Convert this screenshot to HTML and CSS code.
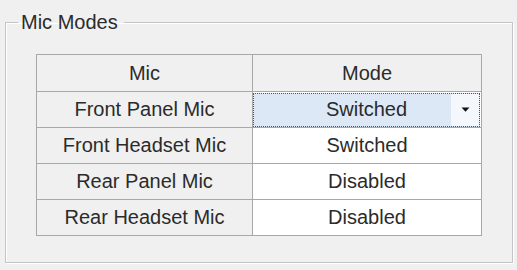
FILE: index.html
```html
<html lang="en"><head>
    <meta charset="UTF-8">
    <meta name="viewport" content="width=device-width, initial-scale=1.0">
    <title>Mic Modes</title>
    <link rel="stylesheet" href="styles.css">
</head>
<body>
    <fieldset class="group-box">
        <legend>Mic Modes</legend>
        <table class="mic-grid">
            <tr>
                <th class="col-mic">Mic</th>
                <th class="col-mode">Mode</th>
            </tr>
            <tr>
                <td class="row-head">Front Panel Mic</td>
                <td class="mode-cell">
                    <div class="combo">
                        <span class="combo-text">Switched</span>
                        <span class="combo-btn">
                            <svg width="9" height="5" viewBox="0 0 9 5"><path d="M0.5 0.5h8L4.5 4.8z" fill="#111"/></svg>
                        </span>
                    </div>
                </td>
            </tr>
            <tr>
                <td class="row-head">Front Headset Mic</td>
                <td class="mode-cell">Switched</td>
            </tr>
            <tr>
                <td class="row-head">Rear Panel Mic</td>
                <td class="mode-cell">Disabled</td>
            </tr>
            <tr>
                <td class="row-head">Rear Headset Mic</td>
                <td class="mode-cell">Disabled</td>
            </tr>
        </table>
    </fieldset>
</body></html>
```

FILE: styles.css
```css
body {
    margin: 0;
    padding: 11px 0 0 5px;
    background-color: #f0f0f0;
    font-family: "Liberation Sans", Arial, sans-serif;
    font-size: 20px;
    color: #2b2b2b;
}
.group-box {
    width: 506px;
    margin: 0;
    padding: 0;
    border: 1px solid #c4c4c4;
    box-shadow: inset 1px 1px 0 #fff, 1px 1px 0 #fff;
}
.group-box legend {
    margin-left: 12px;
    padding: 0 6px 0 3px;
    line-height: 22px;
}
.mic-grid {
    border-collapse: collapse;
    margin: 21px 0 26px 30px;
    table-layout: fixed;
    width: 446px;
    font-size: 20px;
    color: #2b2b2b;
}
.mic-grid th,
.mic-grid td {
    border: 1px solid #a8a8a8;
    padding: 0;
    text-align: center;
    font-weight: normal;
    background-color: #f0f0f0;
}
.mic-grid th {
    height: 37px;
}
.mic-grid td {
    height: 36px;
}
.col-mic {
    width: 215px;
}
.mic-grid td.mode-cell {
    background-color: #fff;
}
.combo {
    display: flex;
    height: 32px;
    margin: 0 1px 0 0;
    border: 1px dotted #555;
    background-color: #dce8f6;
}
.combo-text {
    flex: 1;
    display: flex;
    align-items: center;
    justify-content: center;
    padding-left: 28px;
}
.combo-btn {
    width: 28px;
    display: flex;
    align-items: center;
    justify-content: center;
    background-color: #f4f7fb;
}
```
